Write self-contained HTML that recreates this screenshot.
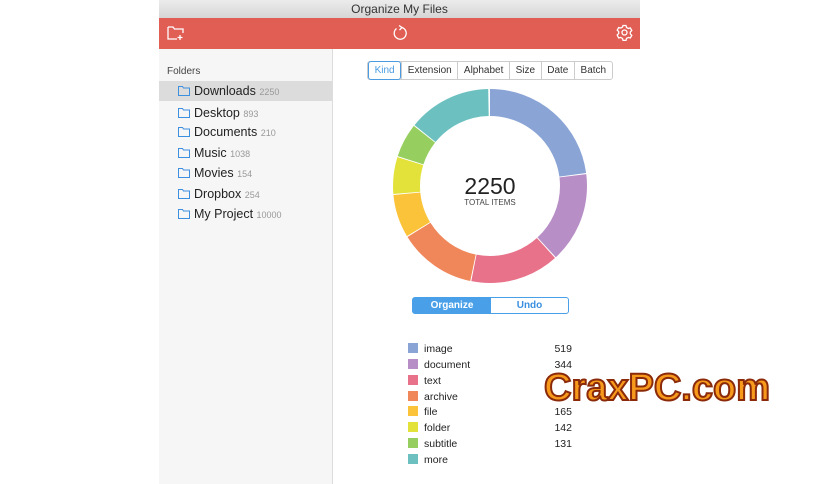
<!DOCTYPE html><html><head><style>
body{margin:0;width:836px;height:484px;background:#fff;font-family:"Liberation Sans",sans-serif;position:relative;overflow:hidden}
.a{position:absolute}
.title{left:159px;top:0;width:481px;height:18px;background:linear-gradient(#ececec,#d6d6d6);text-align:center;font-size:12px;line-height:18px;color:#333}
.bar{left:159px;top:18px;width:481px;height:31px;background:#e05e54}
.side{left:159px;top:49px;width:173px;height:435px;background:#f6f6f6;border-right:1px solid #ddd}
.f{position:absolute;left:0;width:173px;height:20px;font-size:12.5px;line-height:20px;color:#222}
.f span{color:#999;font-size:9px}
.f svg{position:absolute;left:19px;top:5px}
.seg{top:61px;height:17px;border:1px solid #ccc;border-radius:3px;display:flex;font-size:10px;color:#333;background:#fff}
.seg div{padding:0 5.6px;line-height:17px;border-left:1px solid #ccc}
.leg{left:408px;font-size:10.5px;color:#222;width:170px;height:16px;line-height:14px}
.leg i{display:inline-block;width:10px;height:10px;vertical-align:-1px;margin-right:6px}
.leg b{font-weight:normal;position:absolute;right:6px}
</style></head><body>
<div class="a title">Organize My Files</div>
<div class="a bar">
<svg class="a" style="left:8px;top:7px" width="18" height="16" viewBox="0 0 18 16" fill="none" stroke="#fff" stroke-width="1.3"><path d="M1 2h5l1.5 2H16v4M1 2v12h9"/><path d="M13 10v5M10.5 12.5h5"/></svg>
<svg class="a" style="left:232px;top:6px" width="18" height="18" viewBox="0 0 18 18" fill="none" stroke="#fff" stroke-width="1.3"><path d="M11 3.5A6 6 0 1 1 5.5 4.5"/><path d="M8 1.5l3 2-2.5 2.5"/></svg>
<svg class="a" style="left:457px;top:6px" width="17" height="17" viewBox="0 0 17 17" fill="none" stroke="#fff" stroke-width="1.3"><circle cx="8.5" cy="8.5" r="2.5"/><path d="M7 1.5h3l.5 2 1.8 1 2-.6 1.5 2.6-1.5 1.5v1.9l1.5 1.5-1.5 2.6-2-.6-1.8 1-.5 2H7l-.5-2-1.8-1-2 .6L1.2 11l1.5-1.5V7.6L1.2 6.1l1.5-2.6 2 .6 1.8-1z"/></svg>
</div>
<div class="a side">
<div class="a" style="left:8px;top:17px;font-size:10px;color:#444">Folders</div>
<div class="f" style="top:32px;background:#dcdcdc"><svg width="12" height="10" viewBox="0 0 12 10" fill="none" stroke="#3d8fdf"><path d="M.5 .5h4l1 1.5h6v7.5H.5z"/></svg><div style="margin-left:35px">Downloads <span>2250</span></div></div>
<div class="f" style="top:54px"><svg width="12" height="10" viewBox="0 0 12 10" fill="none" stroke="#3d8fdf"><path d="M.5 .5h4l1 1.5h6v7.5H.5z"/></svg><div style="margin-left:35px">Desktop <span>893</span></div></div>
<div class="f" style="top:73px"><svg width="12" height="10" viewBox="0 0 12 10" fill="none" stroke="#3d8fdf"><path d="M.5 .5h4l1 1.5h6v7.5H.5z"/></svg><div style="margin-left:35px">Documents <span>210</span></div></div>
<div class="f" style="top:94px"><svg width="12" height="10" viewBox="0 0 12 10" fill="none" stroke="#3d8fdf"><path d="M.5 .5h4l1 1.5h6v7.5H.5z"/></svg><div style="margin-left:35px">Music <span>1038</span></div></div>
<div class="f" style="top:114px"><svg width="12" height="10" viewBox="0 0 12 10" fill="none" stroke="#3d8fdf"><path d="M.5 .5h4l1 1.5h6v7.5H.5z"/></svg><div style="margin-left:35px">Movies <span>154</span></div></div>
<div class="f" style="top:135px"><svg width="12" height="10" viewBox="0 0 12 10" fill="none" stroke="#3d8fdf"><path d="M.5 .5h4l1 1.5h6v7.5H.5z"/></svg><div style="margin-left:35px">Dropbox <span>254</span></div></div>
<div class="f" style="top:155px"><svg width="12" height="10" viewBox="0 0 12 10" fill="none" stroke="#3d8fdf"><path d="M.5 .5h4l1 1.5h6v7.5H.5z"/></svg><div style="margin-left:35px">My Project <span>10000</span></div></div>
</div>
<div class="a seg" style="left:367px"><div style="border:1px solid #4a9be0;color:#4a9be0;margin:-1px 0;border-radius:3px">Kind</div><div>Extension</div><div>Alphabet</div><div>Size</div><div>Date</div><div>Batch</div></div>
<svg class="a" style="left:390px;top:86px" width="200" height="200" viewBox="0 0 200 200">
<g transform="rotate(-90 100 100)" fill="none" stroke-width="27">
<circle cx="100" cy="100" r="83.5" pathLength="2250" stroke="#8aa4d6" stroke-dasharray="515 2250" stroke-dashoffset="0"/>
<circle cx="100" cy="100" r="83.5" pathLength="2250" stroke="#b88ec6" stroke-dasharray="340 2250" stroke-dashoffset="-519"/>
<circle cx="100" cy="100" r="83.5" pathLength="2250" stroke="#e8728a" stroke-dasharray="333 2250" stroke-dashoffset="-863"/>
<circle cx="100" cy="100" r="83.5" pathLength="2250" stroke="#f0875a" stroke-dasharray="291 2250" stroke-dashoffset="-1200"/>
<circle cx="100" cy="100" r="83.5" pathLength="2250" stroke="#fbc33a" stroke-dasharray="161 2250" stroke-dashoffset="-1495"/>
<circle cx="100" cy="100" r="83.5" pathLength="2250" stroke="#e2e23a" stroke-dasharray="138 2250" stroke-dashoffset="-1660"/>
<circle cx="100" cy="100" r="83.5" pathLength="2250" stroke="#96cf60" stroke-dasharray="127 2250" stroke-dashoffset="-1802"/>
<circle cx="100" cy="100" r="83.5" pathLength="2250" stroke="#6cc1c0" stroke-dasharray="313 2250" stroke-dashoffset="-1933"/>
</g></svg>
<div class="a" style="left:440px;top:173px;width:100px;text-align:center;font-size:23px;color:#222">2250</div>
<div class="a" style="left:440px;top:198px;width:100px;text-align:center;font-size:8px;color:#444">TOTAL ITEMS</div>
<div class="a" style="left:412px;top:297px;width:155px;height:15px;border:1px solid #4aa0e8;border-radius:3px;display:flex;font-size:10px;font-weight:bold;line-height:15px;text-align:center">
<div style="width:78px;background:#4aa0e8;color:#fff">Organize</div><div style="flex:1;color:#3a8fe0">Undo</div></div>
<div class="a leg" style="top:342px"><i style="background:#8aa4d6"></i>image<b>519</b></div>
<div class="a leg" style="top:358px"><i style="background:#b88ec6"></i>document<b>344</b></div>
<div class="a leg" style="top:374px"><i style="background:#e8728a"></i>text</div>
<div class="a leg" style="top:390px"><i style="background:#f0875a"></i>archive</div>
<div class="a leg" style="top:405px"><i style="background:#fbc33a"></i>file<b>165</b></div>
<div class="a leg" style="top:421px"><i style="background:#e2e23a"></i>folder<b>142</b></div>
<div class="a leg" style="top:437px"><i style="background:#96cf60"></i>subtitle<b>131</b></div>
<div class="a leg" style="top:453px"><i style="background:#6cc1c0"></i>more</div>
<div class="a" style="left:544px;top:367px;font-size:38px;font-weight:bold;color:#f79a1c;-webkit-text-stroke:2px #8a2a0a;letter-spacing:0px">CraxPC.com</div>
</body></html>
